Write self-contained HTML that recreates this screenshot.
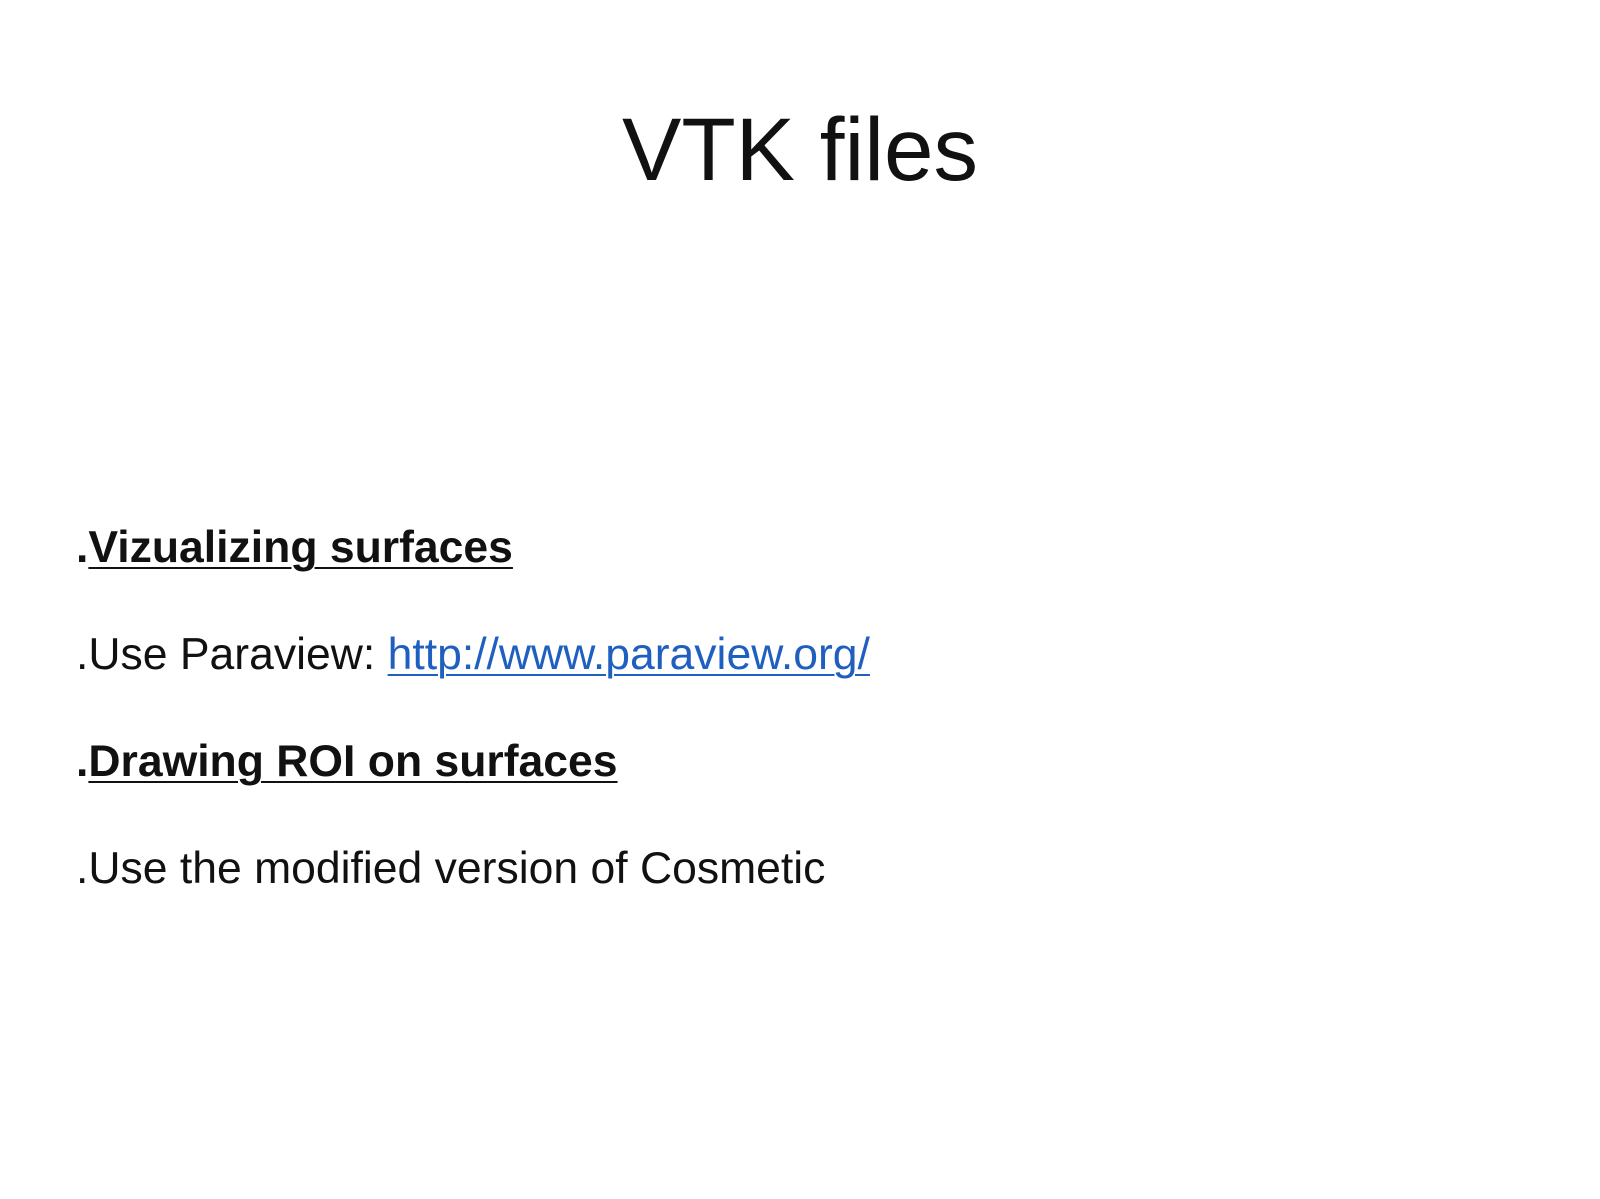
<!DOCTYPE html>
<html><head><meta charset="utf-8"><style>
html,body{margin:0;padding:0;background:#fff;width:1600px;height:1199px;overflow:hidden}
body{position:relative;font-family:"Liberation Sans",sans-serif;color:#111}
.t{position:absolute;line-height:1;white-space:nowrap}
#title{left:0;width:1600px;text-align:center;font-size:89px;top:105px}
.b{left:76px;font-size:44.5px}
.b u{text-decoration-thickness:2px;text-underline-offset:5px}
a{color:#1f5fbf;text-decoration:underline;text-decoration-thickness:2px;text-underline-offset:5px}
</style></head><body>
<div class="t" id="title">VTK files</div>
<div class="t b" style="top:526px"><b>.<u>Vizualizing surfaces</u></b></div>
<div class="t b" style="top:633px">.Use Paraview: <a>http://www.paraview.org/</a></div>
<div class="t b" style="top:740px"><b>.<u>Drawing ROI on surfaces</u></b></div>
<div class="t b" style="top:847px">.Use the modified version of Cosmetic</div>
</body></html>
